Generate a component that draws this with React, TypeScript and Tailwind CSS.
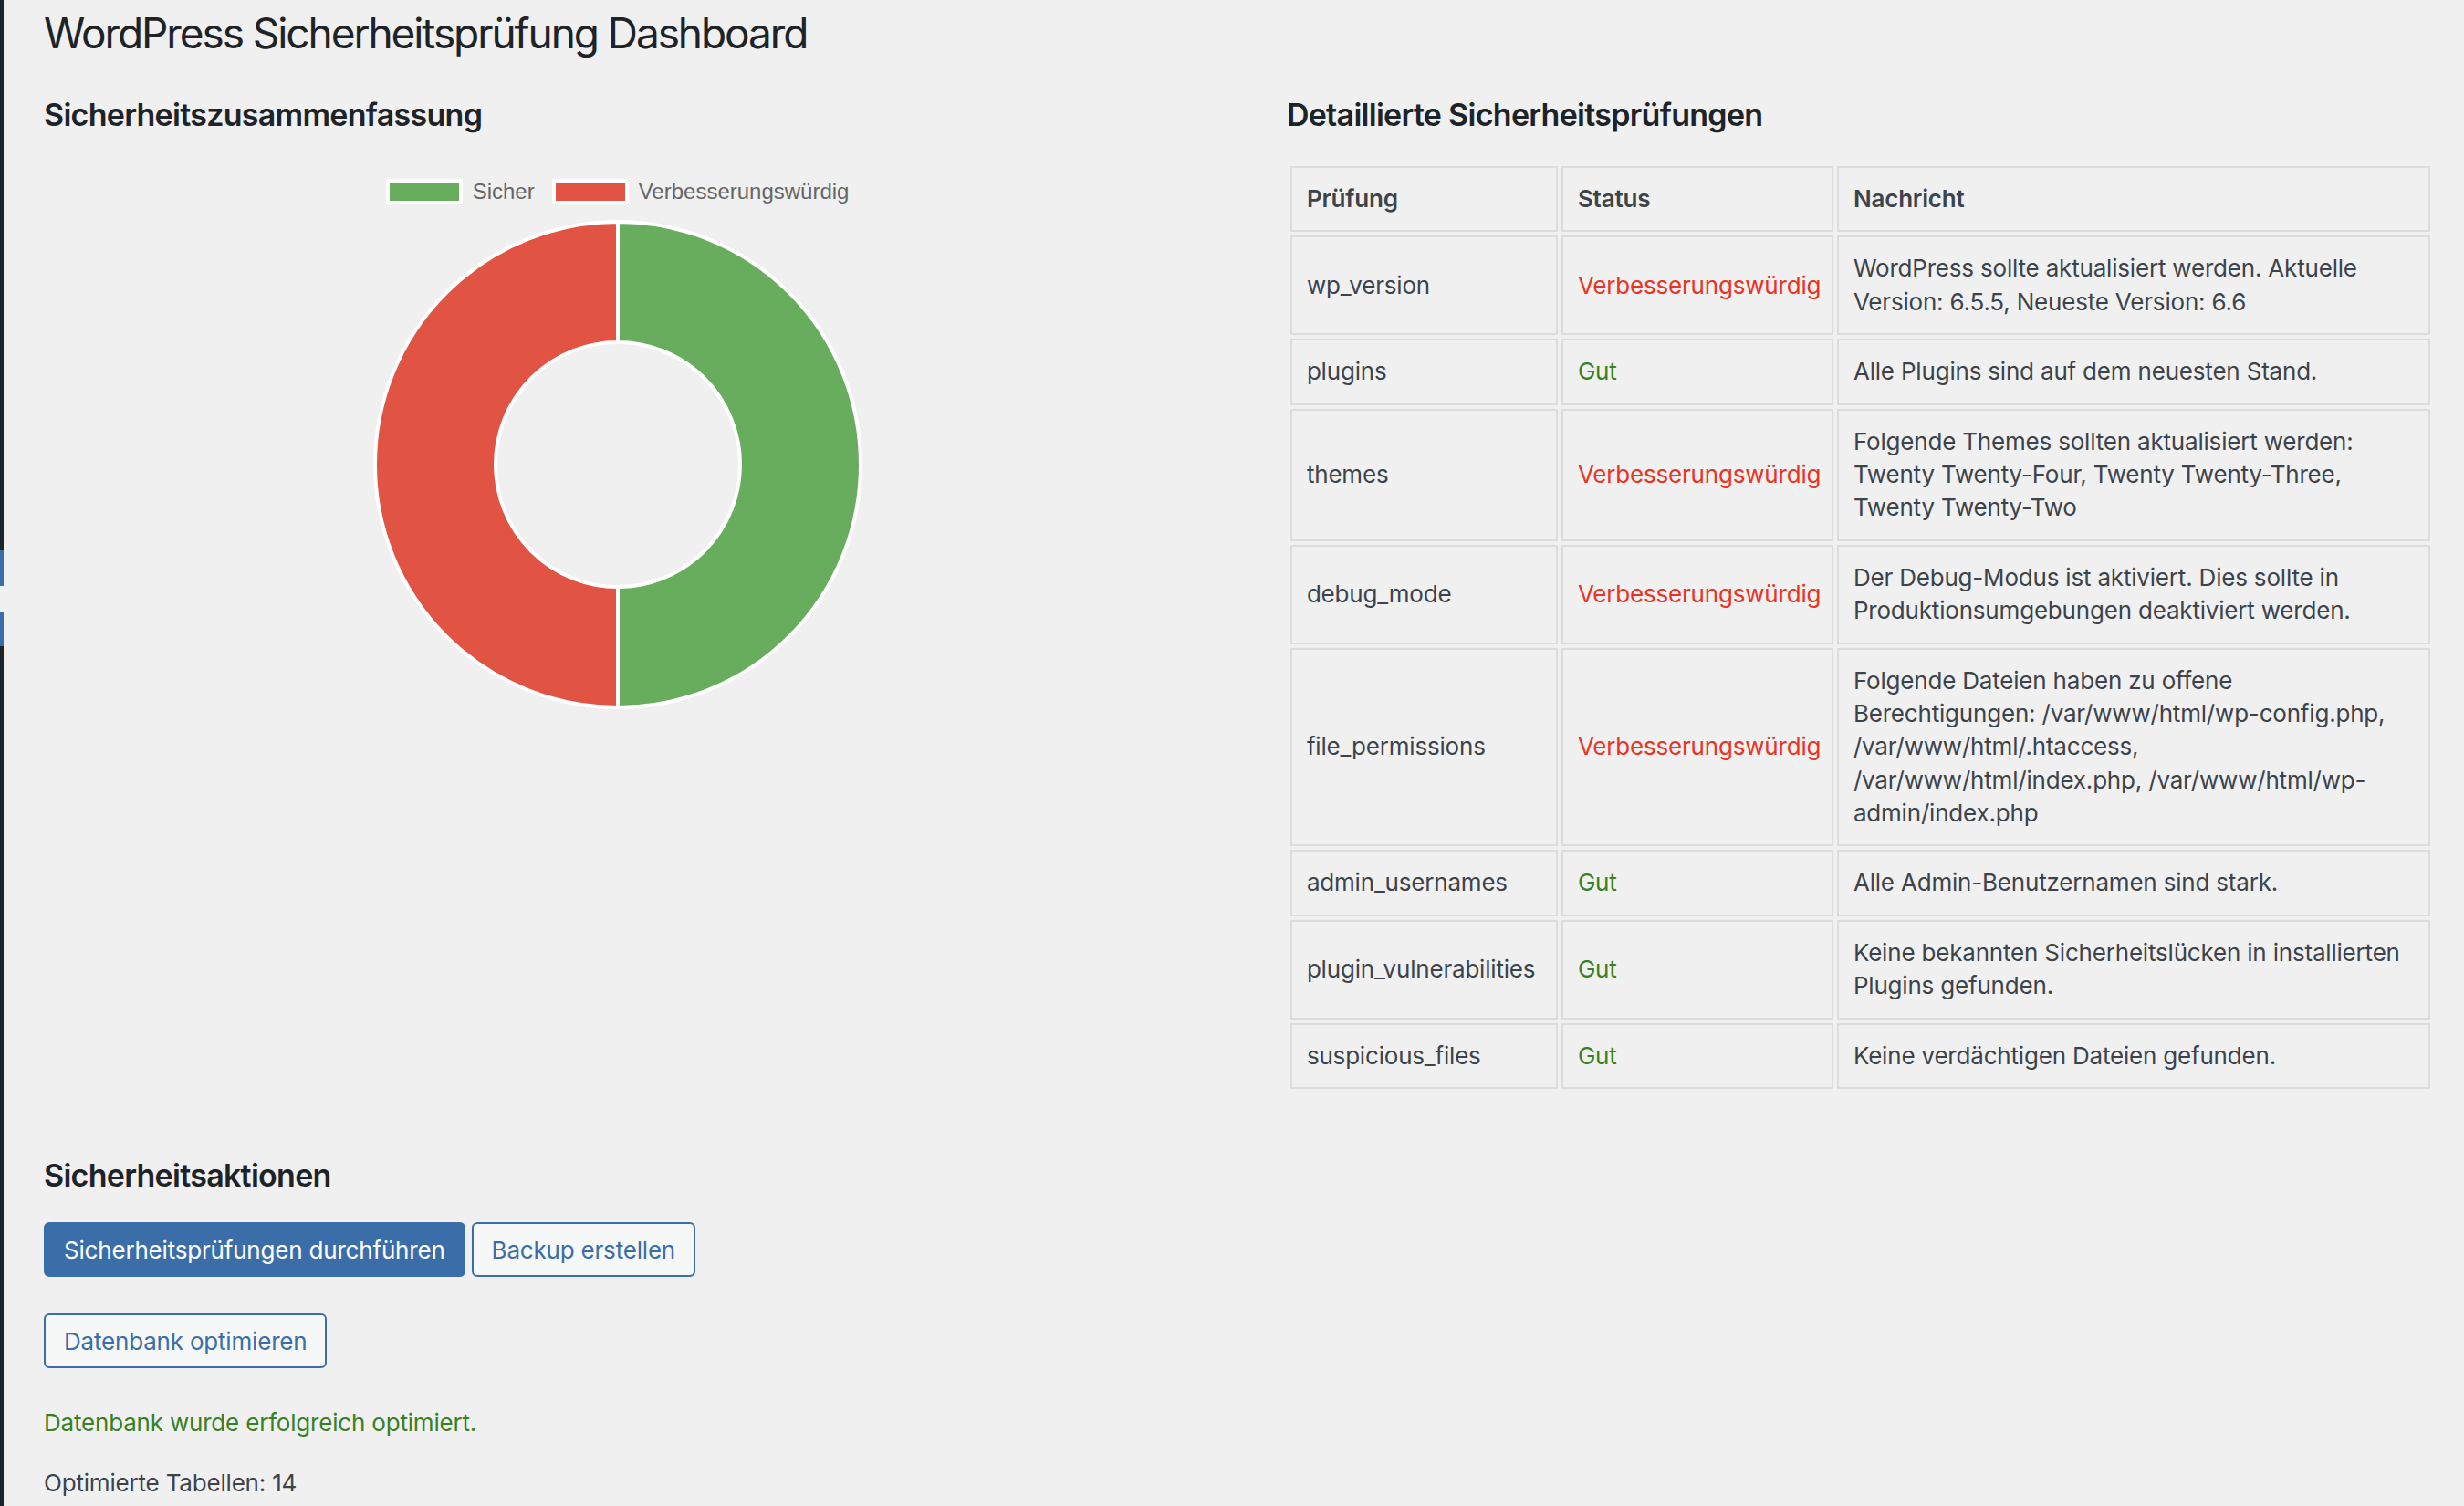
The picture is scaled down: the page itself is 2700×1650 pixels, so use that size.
const rows = [
  {
    check: "wp_version",
    ok: false,
    message: ["WordPress sollte aktualisiert werden. Aktuelle", "Version: 6.5.5, Neueste Version: 6.6"],
  },
  { check: "plugins", ok: true, message: ["Alle Plugins sind auf dem neuesten Stand."] },
  {
    check: "themes",
    ok: false,
    message: [
      "Folgende Themes sollten aktualisiert werden:",
      "Twenty Twenty-Four, Twenty Twenty-Three,",
      "Twenty Twenty-Two",
    ],
  },
  {
    check: "debug_mode",
    ok: false,
    message: ["Der Debug-Modus ist aktiviert. Dies sollte in", "Produktionsumgebungen deaktiviert werden."],
  },
  {
    check: "file_permissions",
    ok: false,
    message: [
      "Folgende Dateien haben zu offene",
      "Berechtigungen: /var/www/html/wp-config.php,",
      "/var/www/html/.htaccess,",
      "/var/www/html/index.php, /var/www/html/wp-",
      "admin/index.php",
    ],
  },
  { check: "admin_usernames", ok: true, message: ["Alle Admin-Benutzernamen sind stark."] },
  {
    check: "plugin_vulnerabilities",
    ok: true,
    message: ["Keine bekannten Sicherheitslücken in installierten", "Plugins gefunden."],
  },
  { check: "suspicious_files", ok: true, message: ["Keine verdächtigen Dateien gefunden."] },
];

const DonutChart = () => {
  return (
    <div className="flex flex-col items-center">
      {/* Legende */}
      <div className="mt-[48px] flex items-center justify-center gap-[19px] font-['Liberation_Sans',Arial,sans-serif] text-[24px] leading-[28px] tracking-normal text-[#666666]">
        <div className="flex items-center gap-[11px]">
          <span className="h-[28px] w-[84px] border-4 border-white bg-[#68ad5e]" />
          <span>Sicher</span>
        </div>
        <div className="flex items-center gap-[11px]">
          <span className="h-[28px] w-[84px] border-4 border-white bg-[#e15343]" />
          <span>Verbesserungswürdig</span>
        </div>
      </div>

      <svg className="mt-[13px]" width="544" height="544" viewBox="0 0 544 544">
        <path
          d="M272 6 A266 266 0 0 1 272 538 L272 406 A134 134 0 0 0 272 138 Z"
          fill="#68ad5e"
          stroke="#ffffff"
          strokeWidth="4"
        />
        <path
          d="M272 538 A266 266 0 0 1 272 6 L272 138 A134 134 0 0 0 272 406 Z"
          fill="#e15343"
          stroke="#ffffff"
          strokeWidth="4"
        />
      </svg>
    </div>
  );
};

const App = () => {
  return (
    <div className="flex min-h-screen bg-[#f0f0f1] font-['Inter',sans-serif] tracking-[-0.012em] text-[#3c434a]">
      {/* Rand der Admin-Seitenleiste */}
      <div className="flex w-[4px] shrink-0 flex-col bg-[#1d2327]">
        <div className="h-[603px]" />
        <div className="h-[39px] bg-[#3b6ea8]" />
        <div className="h-[28px] bg-[#f0f0f1]" />
        <div className="h-[38px] bg-[#3b6ea8]" />
      </div>

      <div className="flex-1 pr-[33px] pl-[44px]">
        <h1 className="pt-[6px] text-[46px] leading-[60px] font-normal tracking-[-0.045em] text-[#1d2327]">
          WordPress Sicherheitsprüfung Dashboard
        </h1>

        <div className="mt-[38px] flex justify-between">
          {/* Zusammenfassung */}
          <div className="w-[48%]">
            <h2 className="text-[34px] leading-[44px] font-semibold tracking-[-0.021em] text-[#1d2327]">
              Sicherheitszusammenfassung
            </h2>
            <DonutChart />
          </div>

          {/* Detaillierte Prüfungen */}
          <div className="w-[48%]">
            <h2 className="text-[34px] leading-[44px] font-semibold tracking-[-0.021em] text-[#1d2327]">
              Detaillierte Sicherheitsprüfungen
            </h2>
            <table className="mt-[30px] w-full table-fixed border-separate border-spacing-[4px] text-left text-[26px] leading-[1.4]">
              <thead>
                <tr>
                  <th className="w-[293px] border-2 border-[#dcdcde] p-4 font-semibold">Prüfung</th>
                  <th className="w-[298px] border-2 border-[#dcdcde] p-4 font-semibold">Status</th>
                  <th className="border-2 border-[#dcdcde] p-4 font-semibold">Nachricht</th>
                </tr>
              </thead>
              <tbody>
                {rows.map((row) => (
                  <tr key={row.check}>
                    <td className="border-2 border-[#dcdcde] p-4 whitespace-nowrap">{row.check}</td>
                    <td
                      className={
                        row.ok
                          ? "border-2 border-[#dcdcde] p-4 whitespace-nowrap text-[#388024]"
                          : "border-2 border-[#dcdcde] p-4 whitespace-nowrap text-[#ea3323]"
                      }
                    >
                      {row.ok ? "Gut" : "Verbesserungswürdig"}
                    </td>
                    <td className="border-2 border-[#dcdcde] p-4">
                      {row.message.map((line) => (
                        <span key={line} className="block whitespace-nowrap">
                          {line}
                        </span>
                      ))}
                    </td>
                  </tr>
                ))}
              </tbody>
            </table>
          </div>
        </div>

        {/* Aktionen */}
        <h2 className="mt-[69px] text-[34px] leading-[44px] font-semibold tracking-[-0.021em] text-[#1d2327]">
          Sicherheitsaktionen
        </h2>
        <div className="mt-[29px] flex gap-[7px]">
          <button className="h-[60px] rounded-[6px] border-2 border-[#3b6ea8] bg-[#3b6ea8] px-[20px] text-[26px] text-white">
            Sicherheitsprüfungen durchführen
          </button>
          <button className="h-[60px] rounded-[6px] border-2 border-[#3b6ea8] bg-[#f6f7f7] px-[20px] text-[26px] text-[#3b6ea8]">
            Backup erstellen
          </button>
        </div>
        <div className="mt-[40px]">
          <button className="h-[60px] rounded-[6px] border-2 border-[#3b6ea8] bg-[#f6f7f7] px-[20px] text-[26px] text-[#3b6ea8]">
            Datenbank optimieren
          </button>
        </div>
        <p className="mt-[42px] text-[26px] leading-[1.4] text-[#388024]">Datenbank wurde erfolgreich optimiert.</p>
        <p className="mt-[30px] text-[26px] leading-[1.4]">Optimierte Tabellen: 14</p>
      </div>
    </div>
  );
};

export default App;
